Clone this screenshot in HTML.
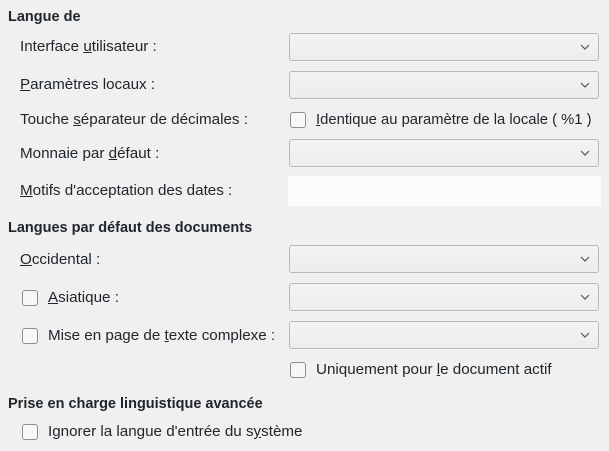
<!DOCTYPE html>
<html><head><meta charset="utf-8"><style>
body{margin:0;width:609px;height:451px;background:#eff0f1;font-family:"Liberation Sans",sans-serif;font-size:15.2px;color:#232629;position:relative;overflow:hidden}
.t{position:absolute;line-height:20px;white-space:nowrap}
.b{font-weight:bold;font-size:14.5px}
.cb{position:absolute;left:289px;width:310px;height:28px;border:1px solid #b8babc;border-radius:3px;background:linear-gradient(#f2f3f4,#eceded);box-sizing:border-box}
.cb svg{position:absolute;right:8px;top:10px}
.ck{position:absolute;width:16px;height:16px;border:1px solid #8d9093;border-radius:3px;background:#f6f7f7;box-sizing:border-box}
u{text-decoration:underline}
</style></head><body>
<div class="t b" style="left:8px;top:7px">Langue de</div>
<div class="t" style="left:20px;top:37px">Interface <u>u</u>tilisateur :</div>
<div class="cb" style="top:33px"><svg width="10" height="6"><path d="M1 1l4 4 4-4" fill="none" stroke="#555" stroke-width="1.2"/></svg></div>
<div class="t" style="left:20px;top:75px"><u>P</u>aramètres locaux :</div>
<div class="cb" style="top:71px"><svg width="10" height="6"><path d="M1 1l4 4 4-4" fill="none" stroke="#555" stroke-width="1.2"/></svg></div>
<div class="t" style="left:20px;top:110px">Touche <u>s</u>éparateur de décimales :</div>
<div class="ck" style="left:290px;top:112px"></div>
<div class="t" style="left:316px;top:110px;font-size:14.8px"><u>I</u>dentique au paramètre de la locale ( %1 )</div>
<div class="t" style="left:20px;top:144px">Monnaie par <u>d</u>éfaut :</div>
<div class="cb" style="top:139px"><svg width="10" height="6"><path d="M1 1l4 4 4-4" fill="none" stroke="#555" stroke-width="1.2"/></svg></div>
<div class="t" style="left:20px;top:181px"><u>M</u>otifs d'acceptation des dates :</div>
<div style="position:absolute;left:288px;top:176px;width:313px;height:30px;background:#fcfcfc"></div>
<div class="t b" style="left:8px;top:218px">Langues par défaut des documents</div>
<div class="t" style="left:20px;top:250px"><u>O</u>ccidental :</div>
<div class="cb" style="top:245px"><svg width="10" height="6"><path d="M1 1l4 4 4-4" fill="none" stroke="#555" stroke-width="1.2"/></svg></div>
<div class="ck" style="left:22px;top:290px"></div>
<div class="t" style="left:48px;top:288px"><u>A</u>siatique :</div>
<div class="cb" style="top:283px"><svg width="10" height="6"><path d="M1 1l4 4 4-4" fill="none" stroke="#555" stroke-width="1.2"/></svg></div>
<div class="ck" style="left:22px;top:328px"></div>
<div class="t" style="left:48px;top:326px">Mise en page de <u>t</u>exte complexe :</div>
<div class="cb" style="top:321px"><svg width="10" height="6"><path d="M1 1l4 4 4-4" fill="none" stroke="#555" stroke-width="1.2"/></svg></div>
<div class="ck" style="left:290px;top:362px"></div>
<div class="t" style="left:316px;top:360px">Uniquement pour <u>l</u>e document actif</div>
<div class="t b" style="left:8px;top:394px">Prise en charge linguistique avancée</div>
<div class="ck" style="left:22px;top:424px"></div>
<div class="t" style="left:48px;top:422px">Ignorer la langue d'entrée du s<u>y</u>stème</div>
</body></html>
